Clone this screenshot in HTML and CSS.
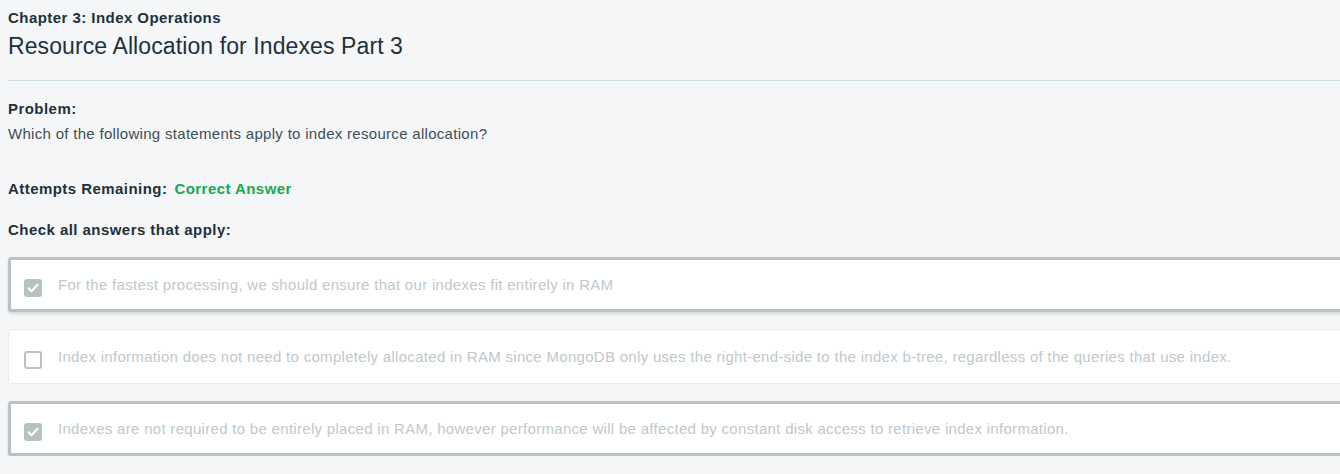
FILE: index.html
```html
<!DOCTYPE html>
<html>
<head>
<meta charset="utf-8">
<link rel="stylesheet" href="styles.css">
</head>
<body>
<div class="page">
  <header class="head">
    <div class="chapter">Chapter 3: Index Operations</div>
    <h1 class="title">Resource Allocation for Indexes Part 3</h1>
  </header>
  <section class="problem">
    <div class="label">Problem:</div>
    <p class="question">Which of the following statements apply to index resource allocation?</p>
  </section>
  <div class="attempts"><span class="label">Attempts Remaining:</span><span class="correct">Correct Answer</span></div>
  <div class="label instr">Check all answers that apply:</div>
  <ul class="answers">
    <li class="answer checked">
      <span class="box"><svg viewBox="0 0 18 18" width="18" height="18"><path d="M4.5 9.2l3 3 6-6.4" fill="none" stroke="#fff" stroke-width="2" stroke-linecap="round" stroke-linejoin="round"/></svg></span>
      <span class="text">For the fastest processing, we should ensure that our indexes fit entirely in RAM</span>
    </li>
    <li class="answer">
      <span class="box empty"></span>
      <span class="text">Index information does not need to completely allocated in RAM since MongoDB only uses the right-end-side to the index b-tree, regardless of the queries that use index.</span>
    </li>
    <li class="answer checked">
      <span class="box"><svg viewBox="0 0 18 18" width="18" height="18"><path d="M4.5 9.2l3 3 6-6.4" fill="none" stroke="#fff" stroke-width="2" stroke-linecap="round" stroke-linejoin="round"/></svg></span>
      <span class="text">Indexes are not required to be entirely placed in RAM, however performance will be affected by constant disk access to retrieve index information.</span>
    </li>
  </ul>
</div>
</body>
</html>
```
FILE: styles.css
```css
html, body {
  margin: 0;
  padding: 0;
  background: #f5f6f7;
  overflow: hidden;
}
body {
  font-family: "Liberation Sans", Arial, sans-serif;
  color: #21313c;
}
.page {
  width: 1360px;
  padding: 10px 0 0 8px;
}
.head {
  border-bottom: 1px solid #cfe0e0;
  padding-bottom: 20px;
}
.chapter {
  font-size: 15px;
  font-weight: bold;
  line-height: 16px;
  letter-spacing: 0.45px;
}
.title {
  margin: 6px 0 0;
  font-size: 23px;
  font-weight: normal;
  line-height: 28px;
  letter-spacing: 0.1px;
}
.problem {
  margin-top: 19px;
}
.label {
  font-size: 15px;
  font-weight: bold;
  line-height: 18px;
  letter-spacing: 0.45px;
}
.question {
  margin: 7px 0 0;
  font-size: 15px;
  line-height: 18px;
  letter-spacing: 0.3px;
  color: #3d4f58;
}
.attempts {
  margin-top: 37px;
  display: flex;
  gap: 7px;
}
.correct {
  color: #13aa52;
  font-size: 15px;
  font-weight: bold;
  line-height: 18px;
  letter-spacing: 0.45px;
}
.instr {
  margin-top: 23px;
}
.answers {
  list-style: none;
  margin: 18px 0 0;
  padding: 0;
  display: flex;
  flex-direction: column;
  gap: 17px;
}
.answer {
  display: flex;
  align-items: center;
  gap: 16px;
  height: 55px;
  box-sizing: border-box;
  padding-left: 15px;
  background: #fff;
  border: 1px solid #e7eeec;
  border-radius: 3px;
}
.answer.checked {
  border: 3px solid #b8c2c5;
  padding-left: 13px;
  box-shadow: 0 2px 3px rgba(0,0,0,0.12);
}
.box {
  width: 18px;
  height: 18px;
  border-radius: 3px;
  background: #b8c2c5;
  flex: none;
  display: flex;
  margin-top: 6px;
}
.box.empty {
  background: #fff;
  box-sizing: border-box;
  border: 2px solid #b8c2c5;
}
.text {
  font-size: 15px;
  color: #c0c8cc;
  line-height: 18px;
  letter-spacing: 0.3px;
}
```
